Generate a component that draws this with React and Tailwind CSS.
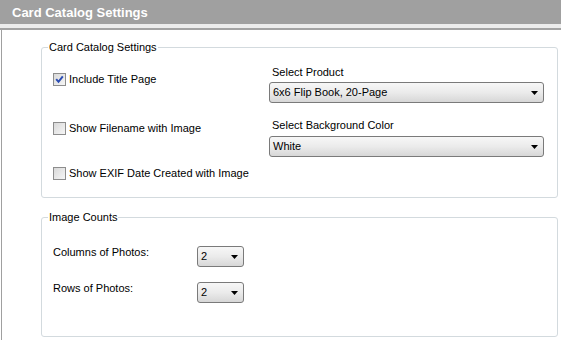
import React from "react";

const font = { fontFamily: '"Liberation Sans", Arial, sans-serif' };

function Arrow() {
  return (
    <svg width="7" height="4" viewBox="0 0 7 4" className="shrink-0">
      <polygon points="0,0 7,0 3.5,4" fill="#000" />
    </svg>
  );
}

function Select({ value, className }) {
  return (
    <div
      className={
        "flex items-center justify-between h-[21px] border border-[#7a7a7a] rounded-[3px] bg-gradient-to-b from-[#f7f7f7] via-[#ebebeb] to-[#d7d7d7] pl-[3px] pr-[5px] text-[11px] leading-[19px] text-black " +
        className
      }
    >
      <span>{value}</span>
      <Arrow />
    </div>
  );
}

function Checkbox({ checked, label, className }) {
  return (
    <div className={"flex items-center h-[13px] " + className}>
      <div className="w-[13px] h-[13px] border border-[#8d8d8d] bg-gradient-to-br from-[#d9d9d9] to-[#f6f6f6] flex items-center justify-center shrink-0">
        {checked && (
          <svg width="11" height="11" viewBox="0 0 11 11">
            <path d="M2.2 5.2 L4.5 7.8 L8.8 2.4" fill="none" stroke="#2a4cb3" strokeWidth="2" />
          </svg>
        )}
      </div>
      <span className="ml-[3px] text-[11px] leading-[13px] text-black whitespace-nowrap">{label}</span>
    </div>
  );
}

export default function App() {
  return (
    <div className="w-[561px] h-[340px] bg-white overflow-hidden" style={font}>
      <div className="h-[24px] bg-[#a0a0a0] pl-[12px] pt-[1px] text-[13px] leading-[24px] font-bold text-white">
        Card Catalog Settings
      </div>
      <div className="h-[4px] bg-[#ececec]" />
      <div className="h-[2px] bg-[#a3a3a3]" />
      <div className="ml-[1px] border-l border-[#a0a0a0] h-[310px] pt-[11px] pl-[39px]">
        <fieldset className="w-[517px] h-[157px] border border-[#d3dade] rounded-[3px]">
          <legend className="ml-[6px] px-[1px] text-[11px] leading-[13px] text-black">Card Catalog Settings</legend>
          <div className="flex">
            <div className="w-[227px] pl-[11px] flex flex-col">
              <Checkbox checked label="Include Title Page" className="mt-[19px]" />
              <Checkbox label="Show Filename with Image" className="mt-[36px]" />
              <Checkbox label="Show EXIF Date Created with Image" className="mt-[32px]" />
            </div>
            <div className="w-[275px] flex flex-col">
              <div className="mt-[12px] pl-[3px] text-[11px] leading-[13px] text-black">Select Product</div>
              <Select value="6x6 Flip Book, 20-Page" className="mt-[3px] w-[275px]" />
              <div className="mt-[16px] pl-[3px] text-[11px] leading-[13px] text-black">Select Background Color</div>
              <Select value="White" className="mt-[4px] w-[275px]" />
            </div>
          </div>
        </fieldset>
        <fieldset className="mt-[13px] w-[517px] h-[126px] border border-[#d3dade] rounded-[3px]">
          <legend className="ml-[6px] px-[1px] text-[11px] leading-[13px] text-black">Image Counts</legend>
          <div className="flex flex-col">
            <div className="flex items-start mt-[22px]">
              <div className="w-[155px] pl-[11px] text-[11px] leading-[13px] text-black">Columns of Photos:</div>
              <Select value="2" className="w-[47px]" />
            </div>
            <div className="flex items-start mt-[15px]">
              <div className="w-[155px] pl-[11px] text-[11px] leading-[13px] text-black">Rows of Photos:</div>
              <Select value="2" className="w-[47px]" />
            </div>
          </div>
        </fieldset>
      </div>
    </div>
  );
}
